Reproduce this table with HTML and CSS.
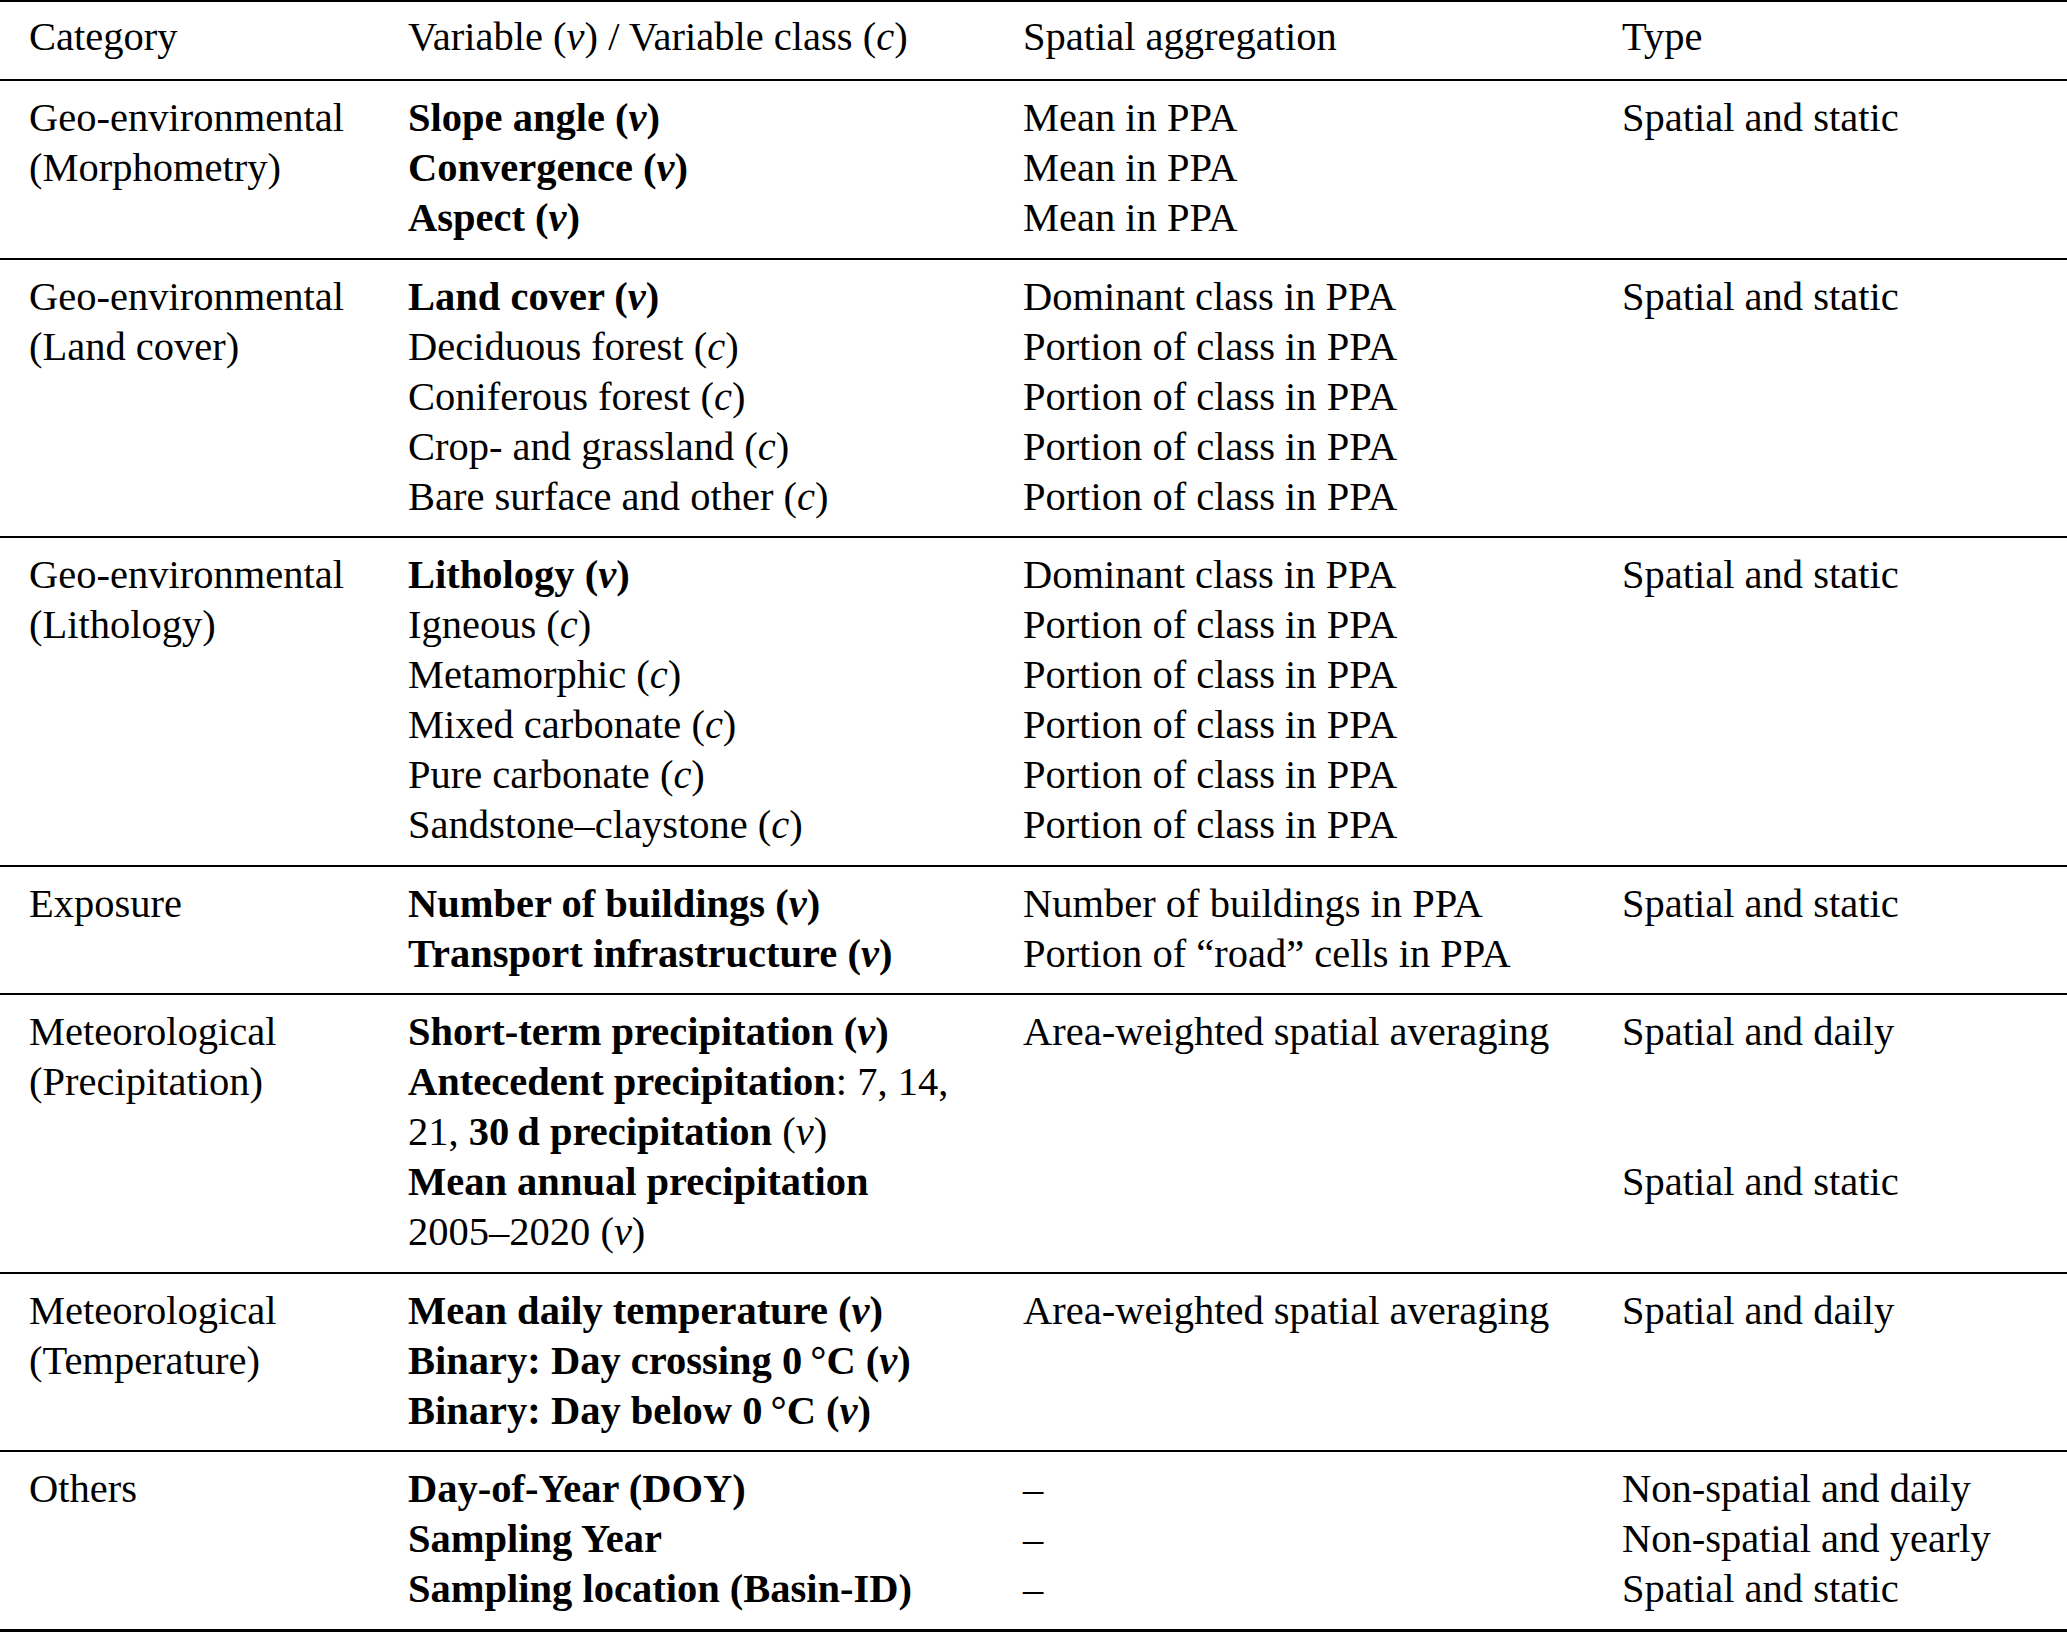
FILE: index.html
```html
<!DOCTYPE html>
<html lang="en">
<head>
<meta charset="utf-8">
<title>Variables table</title>
<link rel="stylesheet" href="styles.css">
</head>
<body>
<table class="vars">
  <colgroup>
    <col class="c-cat">
    <col class="c-var">
    <col class="c-agg">
    <col class="c-type">
  </colgroup>
  <thead>
    <tr class="head">
      <th>Category</th>
      <th>Variable (<i>v</i>) / Variable class (<i>c</i>)</th>
      <th>Spatial aggregation</th>
      <th>Type</th>
    </tr>
  </thead>
  <tbody>
    <tr>
      <td>Geo-environmental<br>(Morphometry)</td>
      <td><b>Slope angle (<i>v</i>)</b><br><b>Convergence (<i>v</i>)</b><br><b>Aspect (<i>v</i>)</b></td>
      <td>Mean in PPA<br>Mean in PPA<br>Mean in PPA</td>
      <td>Spatial and static</td>
    </tr>
    <tr>
      <td>Geo-environmental<br>(Land cover)</td>
      <td><b>Land cover (<i>v</i>)</b><br>Deciduous forest (<i>c</i>)<br>Coniferous forest (<i>c</i>)<br>Crop- and grassland (<i>c</i>)<br>Bare surface and other (<i>c</i>)</td>
      <td>Dominant class in PPA<br>Portion of class in PPA<br>Portion of class in PPA<br>Portion of class in PPA<br>Portion of class in PPA</td>
      <td>Spatial and static</td>
    </tr>
    <tr>
      <td>Geo-environmental<br>(Lithology)</td>
      <td><b>Lithology (<i>v</i>)</b><br>Igneous (<i>c</i>)<br>Metamorphic (<i>c</i>)<br>Mixed carbonate (<i>c</i>)<br>Pure carbonate (<i>c</i>)<br>Sandstone–claystone (<i>c</i>)</td>
      <td>Dominant class in PPA<br>Portion of class in PPA<br>Portion of class in PPA<br>Portion of class in PPA<br>Portion of class in PPA<br>Portion of class in PPA</td>
      <td>Spatial and static</td>
    </tr>
    <tr>
      <td>Exposure</td>
      <td><b>Number of buildings (<i>v</i>)</b><br><b>Transport infrastructure (<i>v</i>)</b></td>
      <td>Number of buildings in PPA<br>Portion of “road” cells in PPA</td>
      <td>Spatial and static</td>
    </tr>
    <tr>
      <td>Meteorological<br>(Precipitation)</td>
      <td><b>Short-term precipitation (<i>v</i>)</b><br><b>Antecedent precipitation</b>: 7, 14,<br>21, <b>30&thinsp;d precipitation</b> (<i>v</i>)<br><b>Mean annual precipitation</b><br>2005–2020 (<i>v</i>)</td>
      <td>Area-weighted spatial averaging</td>
      <td>Spatial and daily<br><br><br>Spatial and static</td>
    </tr>
    <tr>
      <td>Meteorological<br>(Temperature)</td>
      <td><b>Mean daily temperature (<i>v</i>)</b><br><b>Binary: Day crossing 0&thinsp;°C (<i>v</i>)</b><br><b>Binary: Day below 0&thinsp;°C (<i>v</i>)</b></td>
      <td>Area-weighted spatial averaging</td>
      <td>Spatial and daily</td>
    </tr>
    <tr class="last">
      <td>Others</td>
      <td><b>Day-of-Year (DOY)</b><br><b>Sampling Year</b><br><b>Sampling location (Basin-ID)</b></td>
      <td>–<br>–<br>–</td>
      <td>Non-spatial and daily<br>Non-spatial and yearly<br>Spatial and static</td>
    </tr>
  </tbody>
</table>
</body>
</html>
```

FILE: styles.css
```css
html, body {
  margin: 0;
  padding: 0;
  background: #ffffff;
}

body {
  font-family: "Liberation Serif", "Times New Roman", serif;
  font-size: 40.5px;
  line-height: 50px;
  color: #000000;
}

.vars {
  width: 2067px;
  table-layout: fixed;
  border-collapse: separate;
  border-spacing: 0;
  border-top: 2px solid #000000;
}

.c-cat { width: 379px; }
.c-var { width: 615px; }
.c-agg { width: 599px; }
.c-type { width: 474px; }

.vars th,
.vars td {
  text-align: left;
  vertical-align: top;
  font-weight: normal;
  padding: 12px 0 14.5px 29px;
  border-bottom: 2px solid #000000;
  white-space: nowrap;
}

.vars .head th {
  padding-top: 10px;
  padding-bottom: 17px;
}

.vars .last td {
  border-bottom-width: 3px;
}

.vars b {
  font-weight: bold;
}

.vars i {
  font-style: italic;
}
```
